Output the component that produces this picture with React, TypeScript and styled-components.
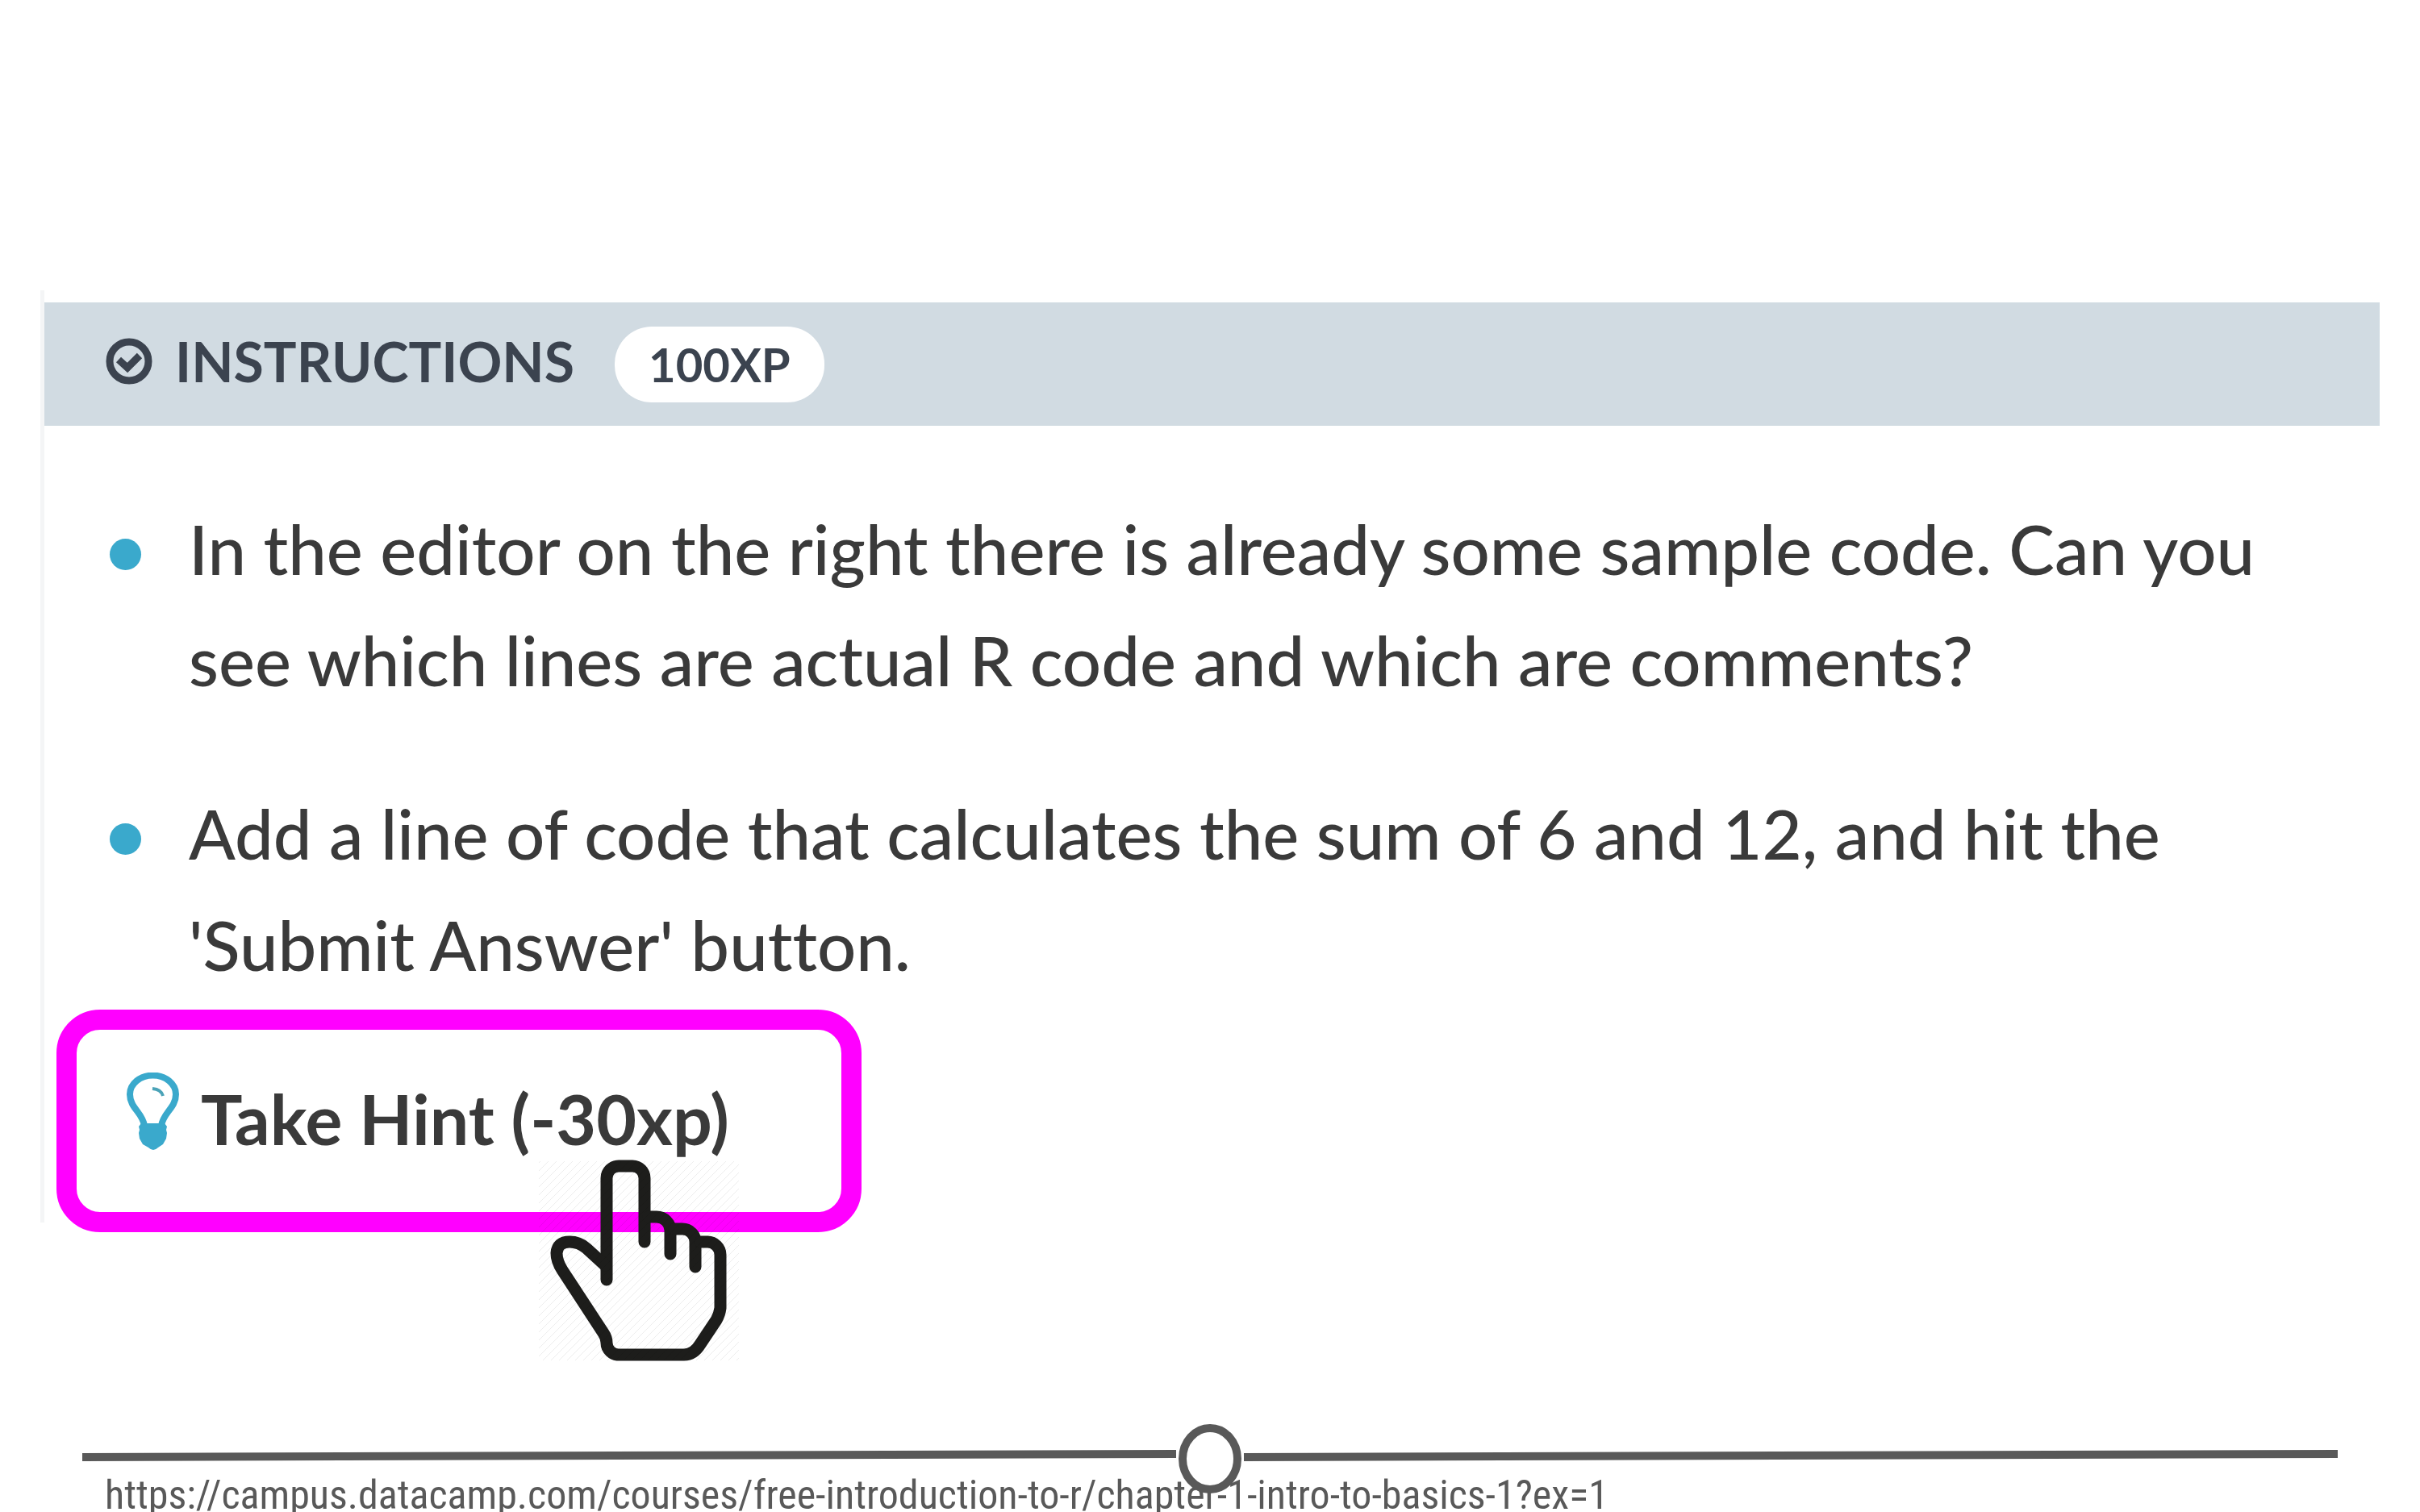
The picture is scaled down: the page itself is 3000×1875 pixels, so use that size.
import React from 'react';
import styled, { createGlobalStyle } from 'styled-components';

const GlobalStyle = createGlobalStyle`
  * { box-sizing: border-box; }
  body { margin: 0; background: #fff; }
`;

const Slide = styled.main`
  display: flex;
  flex-direction: column;
  height: 100vh;
  padding: 360px 50px 0;
  overflow: hidden;
  font-family: Lato, 'Open Sans', sans-serif;
  font-variant-ligatures: none;
  color: #3a3a3a;
`;

const Panel = styled.section`
  flex: none;
  border-left: 5px solid #f4f5f6;
  padding-top: 15px;
`;

const PanelHeader = styled.header`
  display: flex;
  align-items: center;
  gap: 50px;
  height: 153px;
  padding-left: 76px;
  background: #d1dbe2;
  color: #3b434f;
`;

const Title = styled.div`
  display: flex;
  align-items: center;
  gap: 28px;
  padding-bottom: 8px;
`;

const CheckIcon = styled.svg`
  width: 58px;
  height: 58px;
`;

const Heading = styled.h1`
  margin: 0;
  font-size: 68px;
  line-height: 84px;
  font-weight: 700;
`;

const XpBadge = styled.span`
  padding: 0 42px;
  border-radius: 46px;
  background: #fff;
  font-size: 58px;
  line-height: 94px;
  font-weight: 700;
`;

const Tasks = styled.ul`
  display: flex;
  flex-direction: column;
  gap: 77px;
  margin: 0;
  padding: 83px 100px 0 81px;
  list-style: none;
`;

const Task = styled.li`
  display: flex;
  gap: 59px;
  font-size: 85px;
  font-weight: 500;
  line-height: 138px;

  &::before {
    content: '';
    flex: none;
    width: 39px;
    height: 39px;
    margin-top: 57px;
    border-radius: 50%;
    background: #3aa9cc;
  }
`;

const HintArea = styled.div`
  position: relative;
  margin: 12px 0 -12px 15px;
`;

const HintButton = styled.button`
  display: flex;
  align-items: center;
  gap: 26px;
  width: 998px;
  height: 276px;
  padding: 0 0 8px 62px;
  border: 25px solid #ff00ff;
  border-radius: 54px;
  background: transparent;
  color: #3a3a3a;
  font-family: inherit;
  font-size: 86px;
  font-weight: 700;
  cursor: pointer;
`;

const BulbIcon = styled.svg`
  width: 66px;
  height: 112px;
`;

const Pointer = styled.svg`
  position: absolute;
  left: 596px;
  top: 186px;
  width: 250px;
  height: 250px;
  pointer-events: none;
`;

const Footer = styled.footer`
  flex: none;
  margin-top: auto;
  padding-left: 80px;
  height: 109px;
  position: relative;
`;

const Rule = styled.svg`
  position: absolute;
  left: 52px;
  top: 0;
  width: calc(100% - 104px);
  height: 88px;
`;

const SourceLink = styled.a`
  display: block;
  padding-top: 58px;
  color: #595959;
  font-family: 'Roboto Condensed', 'Liberation Sans Narrow', Roboto, sans-serif;
  font-size: 50px;
  line-height: 60px;
  text-decoration: none;
  white-space: nowrap;
`;

const tasks = [
  'In the editor on the right there is already some sample code. Can you see which lines are actual R code and which are comments?',
  "Add a line of code that calculates the sum of 6 and 12, and hit the 'Submit Answer' button.",
];

export default function App() {
  return (
    <>
      <GlobalStyle />
      <Slide>
        <Panel>
          <PanelHeader>
            <Title>
              <CheckIcon viewBox="0 0 58 58" fill="none" aria-hidden="true">
                <circle cx="29" cy="29" r="24" stroke="currentColor" strokeWidth="9" />
                <path d="M16 27l11 10 15-15" stroke="currentColor" strokeWidth="9" />
              </CheckIcon>
              <Heading>INSTRUCTIONS</Heading>
            </Title>
            <XpBadge>100XP</XpBadge>
          </PanelHeader>
          <Tasks>
            {tasks.map((task) => (
              <Task key={task}>{task}</Task>
            ))}
          </Tasks>
          <HintArea>
            <HintButton type="button">
              <BulbIcon viewBox="0 0 66 112" fill="none" aria-hidden="true">
                <path
                  d="M22 66C20 50 4 44 4 27A28 23 0 0 1 61 27C61 44 45 50 43 66"
                  stroke="#3aa9cc"
                  strokeWidth="8"
                />
                <path d="M32 20q11 1 13 9" stroke="#4ba3b8" strokeWidth="4" />
                <path d="M18 63H47L50 67L49 71L50 75L49 82L45 89L39 93Q33 99 27 93L20 89L16 82L15 75L16 71L15 67Z" fill="#3aa9cc" />
              </BulbIcon>
              Take Hint (-30xp)
            </HintButton>
            <Pointer viewBox="666 1438 250 250" fill="none" aria-hidden="true">
              <defs>
                <pattern id="hatch" width="10" height="10" patternUnits="userSpaceOnUse">
                  <path d="M-2 2l4-4M0 10l10-10M8 12l4-4" stroke="#000" strokeOpacity="0.07" strokeWidth="1" />
                </pattern>
              </defs>
              <g stroke="#1d1d1b" strokeWidth="15" strokeLinecap="round" strokeLinejoin="round">
                <path d="M752 1587V1461A15 15 0 0 1 767 1446H784A15 15 0 0 1 799 1461V1540" />
                <path d="M804 1509H814A17 17 0 0 1 831 1526V1555" />
                <path d="M836 1524H846A16 16 0 0 1 862 1540V1571" />
                <path d="M868 1540H877A16 16 0 0 1 893 1556V1622Q892 1630 888 1637L868 1667Q860 1680 848 1680H768A15 15 0 0 1 752 1665Q752 1659 748 1653L697 1575Q690 1564 690 1554Q691 1540 706 1540Q718 1540 727 1548L750 1569" />
              </g>
              <rect x="668" y="1440" width="248" height="247" fill="url(#hatch)" />
            </Pointer>
          </HintArea>
        </Panel>
        <Footer>
          <Rule viewBox="102 1765 2796 88" preserveAspectRatio="none" aria-hidden="true">
            <path d="M102 1806L1458 1802M1542 1806L2898 1802" stroke="#595959" strokeWidth="10" />
            <ellipse cx="1500" cy="1808" rx="34" ry="38" fill="#fff" stroke="#595959" strokeWidth="10" />
          </Rule>
          <SourceLink href="https://campus.datacamp.com/courses/free-introduction-to-r/chapter-1-intro-to-basics-1?ex=1">
            https://campus.datacamp.com/courses/free-introduction-to-r/chapter-1-intro-to-basics-1?ex=1
          </SourceLink>
        </Footer>
      </Slide>
    </>
  );
}
